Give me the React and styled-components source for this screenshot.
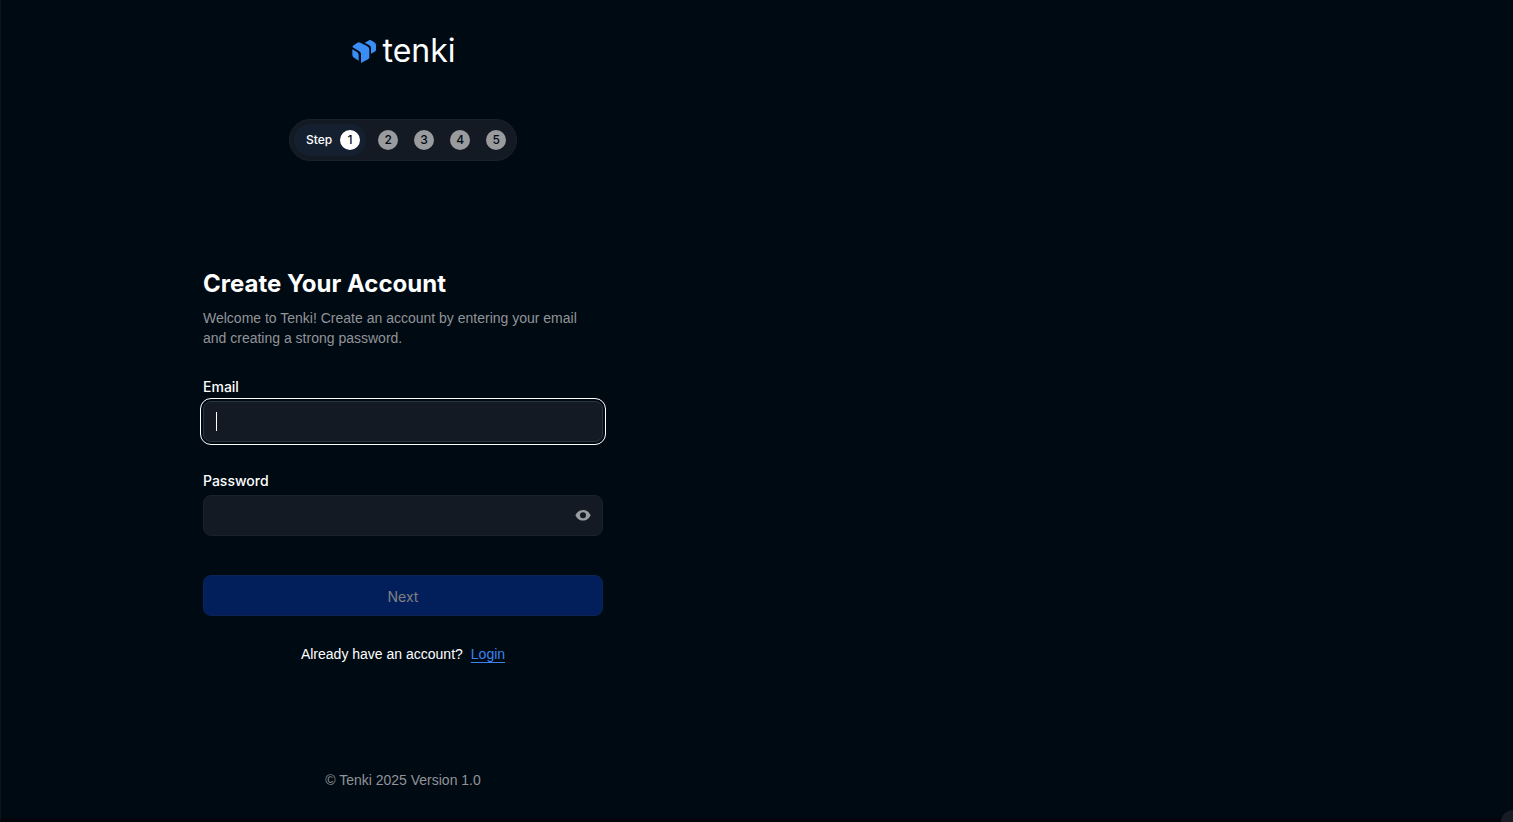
import { useState } from 'react'
import styled, { createGlobalStyle } from 'styled-components'

const bodyFont = '"Liberation Sans", Arial, sans-serif'

const GlobalStyle = createGlobalStyle`
    * {
        box-sizing: border-box;
    }

    body {
        margin: 0;
        background: #000a13;
        color: #ffffff;
        font-family: Inter, "Liberation Sans", sans-serif;
        font-size: 14px;
        line-height: 20px;
    }
`;

const Page = styled.div`
    display: grid;
    grid-template-columns: 67fr 59fr;
    min-height: 100vh;
    border-left: 1px solid #0f1416;
    border-bottom: 4px solid #02060c;
`;

const Panel = styled.main`
    display: flex;
    flex-direction: column;
    align-items: center;
    padding: 32px 24px 28px;
`;

const Logo = styled.div`
    display: flex;
    align-items: center;
    gap: 4px;
    height: 38px;
    font-size: 32px;
    font-weight: 400;
    line-height: 38px;
`;

const Steps = styled.ol`
    display: flex;
    align-items: center;
    gap: 8px;
    height: 42px;
    margin: 49px 0 0;
    padding: 4px 6px 4px 4px;
    list-style: none;
    background: #141a23;
    border: 1px solid #1b212b;
    border-radius: 21px;
`;

const Step = styled.li`
    display: flex;
    align-items: center;
    gap: 8px;
    height: 32px;
    padding: ${props => props.$active ? '0 6px 0 12px' : '0 4px'};
    border-radius: 16px;
    background: ${props => props.$active ? '#142030' : 'transparent'};
    font-size: 12px;
    font-weight: 500;
`;

const StepNumber = styled.span`
    width: 20px;
    height: 20px;
    border-radius: 50%;
    background: ${props => props.$active ? '#ffffff' : '#999b9e'};
    color: #000a13;
    text-align: center;
`;

const Form = styled.form`
    display: flex;
    flex-direction: column;
    width: 100%;
    max-width: 400px;
    margin: auto 0;
`;

const Title = styled.h1`
    margin: 0 0 8px;
    font-size: 24px;
    font-weight: 700;
    line-height: 32px;
`;

const Intro = styled.p`
    margin: 0 0 29px;
    color: #929498;
    font-family: ${bodyFont};
`;

const Field = styled.div`
    display: flex;
    flex-direction: column;
    gap: 4px;
    margin-bottom: 29px;
`;

const Label = styled.label`
    font-weight: 500;
`;

const InputWrap = styled.div`
    position: relative;
`;

const Input = styled.input`
    display: block;
    width: 100%;
    height: 41px;
    padding: 0 12px;
    color: #ffffff;
    font: inherit;
    background: #141a23;
    border: 1px solid #1a212b;
    border-radius: 8px;
    outline: none;

    &:focus {
        border-color: #2b343f;
        outline: 1px solid #ffffff;
        outline-offset: 2px;
        caret-color: transparent;
    }
`;

const Caret = styled.span`
    position: absolute;
    top: 11px;
    left: 13px;
    width: 1px;
    height: 19px;
    background: #ffffff;
    pointer-events: none;
`;

const EyeButton = styled.button`
    position: absolute;
    top: 12px;
    right: 12px;
    width: 16px;
    height: 16px;
    padding: 0;
    color: #999b9e;
    background: none;
    border: none;

    svg {
        display: block;
    }
`;

const NextButton = styled.button`
    height: 41px;
    margin-top: 10px;
    padding: 3px 0 0;
    color: #7f8082;
    font: inherit;
    background: #031f5b;
    border: 1px solid #0c2455;
    border-radius: 8px;
`;

const LoginRow = styled.p`
    display: flex;
    justify-content: center;
    gap: 8px;
    margin: 28px 0 0;
    font-family: ${bodyFont};
`;

const Link = styled.a`
    color: #3c83f0;
    text-decoration: underline;
    text-underline-offset: 3px;
`;

const Footer = styled.footer`
    color: #929498;
    font-family: ${bodyFont};
`;

const Corner = styled.div`
    position: fixed;
    right: -12px;
    bottom: -12px;
    width: 24px;
    height: 24px;
    border-radius: 50%;
    background: #171c24;
`;

function LogoMark() {
    return (
        <svg width="28" height="28" viewBox="0 0 84 84" fill="#3b8df6" aria-hidden="true">
            <path d="M8 27 L22 17 Q26 14 31 17 L51 27 Q58 31 58 37 V61 Q58 65 54 67 L33 78 V52 Q33 46 28 43 L8 31 Z" />
            <path d="M7 37 L22 46 Q26 49 26 54 V71 L12 62 Q7 59 7 53 Z" />
            <path d="M44 17 L55 11 Q59 8 63 10 L73 16 Q78 19 78 24 V38 Q78 42 74 44 L63 50 V34 Q63 28 58 25 Z" />
        </svg>
    )
}

export default function App() {
    const [email, setEmail] = useState('')
    const [password, setPassword] = useState('')
    const [focused, setFocused] = useState(true)
    const [visible, setVisible] = useState(false)

    return (
        <>
            <GlobalStyle />
            <Page>
                <Panel>
                    <Logo>
                        <LogoMark />
                        <span>tenki</span>
                    </Logo>
                    <Steps>
                        {[1, 2, 3, 4, 5].map(n => (
                            <Step key={n} $active={n === 1}>
                                {n === 1 && <span>Step</span>}
                                <StepNumber $active={n === 1}>{n}</StepNumber>
                            </Step>
                        ))}
                    </Steps>
                    <Form onSubmit={e => e.preventDefault()}>
                        <Title>Create Your Account</Title>
                        <Intro>Welcome to Tenki! Create an account by entering your email and creating a strong password.</Intro>
                        <Field>
                            <Label htmlFor="email">Email</Label>
                            <InputWrap>
                                <Input
                                    id="email"
                                    type="email"
                                    autoFocus
                                    value={email}
                                    onChange={e => setEmail(e.target.value)}
                                    onFocus={() => setFocused(true)}
                                    onBlur={() => setFocused(false)}
                                />
                                {focused && !email && <Caret />}
                            </InputWrap>
                        </Field>
                        <Field>
                            <Label htmlFor="password">Password</Label>
                            <InputWrap>
                                <Input
                                    id="password"
                                    type={visible ? 'text' : 'password'}
                                    value={password}
                                    onChange={e => setPassword(e.target.value)}
                                />
                                <EyeButton type="button" aria-label="Show password" onClick={() => setVisible(!visible)}>
                                    <svg width="16" height="16" viewBox="0 0 16 16" fill="currentColor">
                                        <path fillRule="evenodd" d="M8 3C4.400 3 1.600 5.200.4 8.300c1.200 3 4 5.300 7.600 5.300s6.400-2.300 7.600-5.300C14.400 5.200 11.600 3 8 3ZM8 11.300a3 3 0 1 1 0-6 3 3 0 0 1 0 6Z" />
                                    </svg>
                                </EyeButton>
                            </InputWrap>
                        </Field>
                        <NextButton type="submit" disabled={!email || !password}>Next</NextButton>
                        <LoginRow>
                            Already have an account? <Link href="#login">Login</Link>
                        </LoginRow>
                    </Form>
                    <Footer>© Tenki 2025 Version 1.0</Footer>
                </Panel>
            </Page>
            <Corner />
        </>
    )
}
